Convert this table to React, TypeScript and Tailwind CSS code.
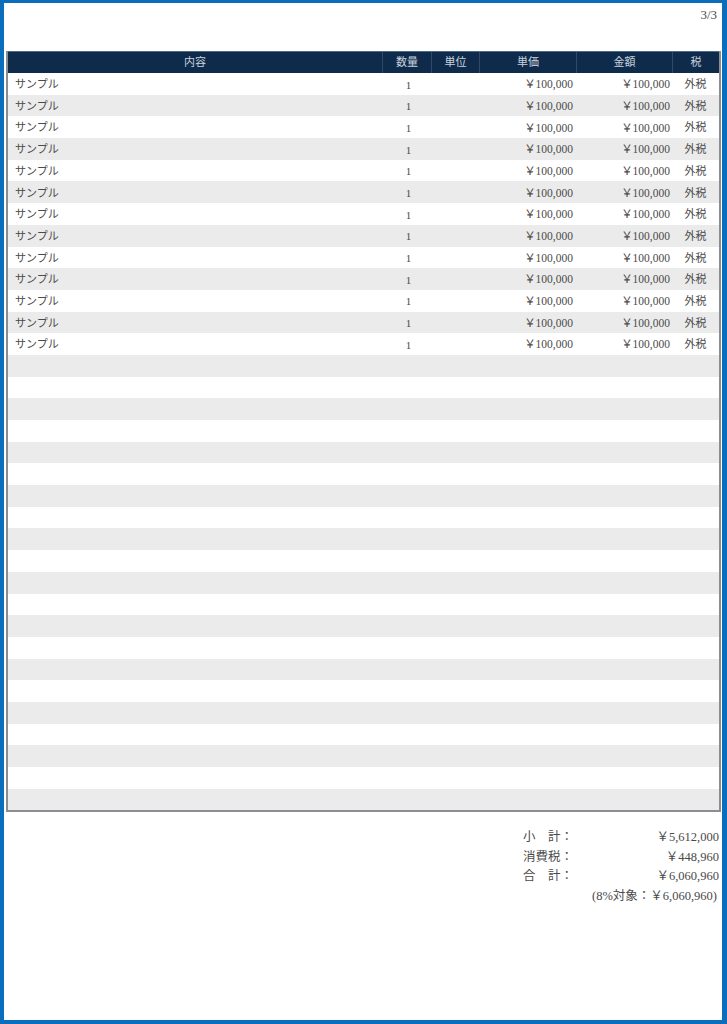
const rows = Array.from({ length: 34 }, (_, i) => i);

const cell = "flex items-center h-full";

export default function App() {
  return (
    <div
      className="w-[727px] h-[1024px] border-l-4 border-t-[3px] border-r-[5px] border-b-4 border-[#0a6ebd] bg-white text-[#4a4a4a] flex flex-col"
      style={{ fontFamily: '"Liberation Serif", "Noto Sans CJK JP", serif' }}
    >
      <div className="flex justify-end pr-[5px] pt-[2px] h-[48px] text-[13px]">3/3</div>

      <div className="ml-[2px] w-[715px] border-l-2 border-r-2 border-b-2 border-[#8a8e93]">
        <div className="grid grid-cols-[374px_49px_48px_97px_96px_47px] h-[22px] bg-[#0f2b4b] text-[#c9d1dc] text-[11px] border-t border-[#4e6b8c]">
          <div className={`${cell} justify-center`}>内容</div>
          <div className={`${cell} justify-center border-l border-[#2f4a69]`}>数量</div>
          <div className={`${cell} justify-center border-l border-[#2f4a69]`}>単位</div>
          <div className={`${cell} justify-center border-l border-[#2f4a69]`}>単価</div>
          <div className={`${cell} justify-center border-l border-[#2f4a69]`}>金額</div>
          <div className={`${cell} justify-center border-l border-[#2f4a69]`}>税</div>
        </div>
        {rows.map((i) => (
          <div
            key={i}
            className={`grid grid-cols-[374px_49px_48px_97px_96px_47px] h-[21.7px] text-[11px] ${
              i % 2 === 1 ? "bg-[#ebebeb]" : "bg-white"
            }`}
          >
            {i < 13 ? (
              <>
                <div className={`${cell} pl-[7px] pt-[1px]`}>サンプル</div>
                <div className={`${cell} justify-center pt-[2px] pl-[4px]`}>1</div>
                <div className={cell}></div>
                <div className={`${cell} justify-end pr-[3px] pt-[2px] text-[11.5px]`}>￥100,000</div>
                <div className={`${cell} justify-end pr-[2px] pt-[2px] text-[11.5px]`}>￥100,000</div>
                <div className={`${cell} justify-center pt-[1px]`}>外税</div>
              </>
            ) : null}
          </div>
        ))}
      </div>

      <div className="flex justify-end pr-[3px] pt-[16px]">
        <div className="grid grid-cols-[50px_146px] gap-y-[1px] text-[12.5px] leading-[18.5px]">
          <div>小　計：</div>
          <div className="text-right">￥5,612,000</div>
          <div>消費税：</div>
          <div className="text-right">￥448,960</div>
          <div>合　計：</div>
          <div className="text-right">￥6,060,960</div>
          <div className="col-span-2 text-right pr-[2px]">(8%対象：￥6,060,960)</div>
        </div>
      </div>
    </div>
  );
}
